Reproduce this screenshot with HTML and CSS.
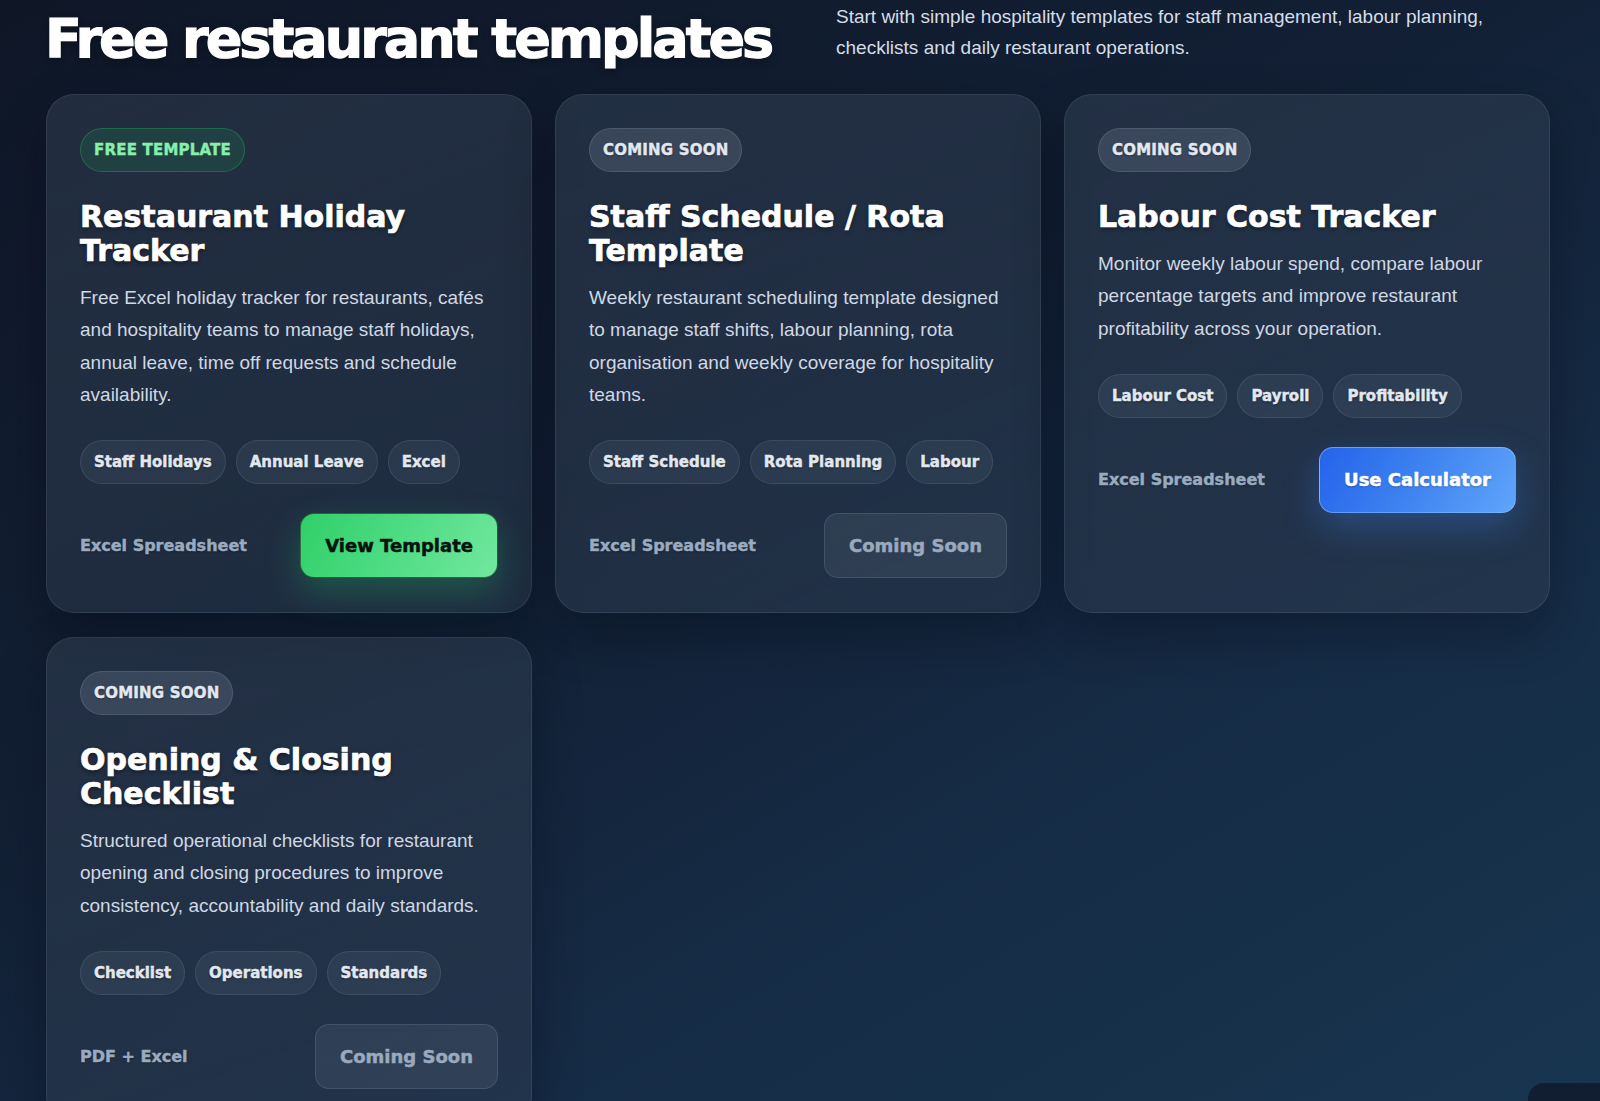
FILE: index.html
```html
<!DOCTYPE html>
<html lang="en">
<head>
<meta charset="utf-8">
<title>Free restaurant templates</title>
<link rel="stylesheet" href="styles.css">
</head>
<body>
<main class="page">
  <header class="hero">
    <h1 class="hero-title">Free restaurant templates</h1>
    <p class="hero-text">Start with simple hospitality templates for staff management, labour planning, checklists and daily restaurant operations.</p>
  </header>

  <section class="grid">
    <article class="card">
      <span class="badge badge-free">FREE TEMPLATE</span>
      <h2 class="card-title">Restaurant Holiday Tracker</h2>
      <p class="card-text">Free Excel holiday tracker for restaurants, cafés and hospitality teams to manage staff holidays, annual leave, time off requests and schedule availability.</p>
      <ul class="tags">
        <li class="tag">Staff Holidays</li>
        <li class="tag">Annual Leave</li>
        <li class="tag">Excel</li>
      </ul>
      <div class="card-foot">
        <span class="format">Excel Spreadsheet</span>
        <a class="btn btn-green" href="#">View Template</a>
      </div>
    </article>

    <article class="card">
      <span class="badge badge-soon">COMING SOON</span>
      <h2 class="card-title">Staff Schedule / Rota Template</h2>
      <p class="card-text">Weekly restaurant scheduling template designed to manage staff shifts, labour planning, rota organisation and weekly coverage for hospitality teams.</p>
      <ul class="tags">
        <li class="tag">Staff Schedule</li>
        <li class="tag">Rota Planning</li>
        <li class="tag">Labour</li>
      </ul>
      <div class="card-foot">
        <span class="format">Excel Spreadsheet</span>
        <span class="btn btn-muted">Coming Soon</span>
      </div>
    </article>

    <article class="card">
      <span class="badge badge-soon">COMING SOON</span>
      <h2 class="card-title">Labour Cost Tracker</h2>
      <p class="card-text">Monitor weekly labour spend, compare labour percentage targets and improve restaurant profitability across your operation.</p>
      <ul class="tags">
        <li class="tag">Labour Cost</li>
        <li class="tag">Payroll</li>
        <li class="tag">Profitability</li>
      </ul>
      <div class="card-foot">
        <span class="format">Excel Spreadsheet</span>
        <a class="btn btn-blue" href="#">Use Calculator</a>
      </div>
    </article>

    <article class="card">
      <span class="badge badge-soon">COMING SOON</span>
      <h2 class="card-title">Opening &amp; Closing Checklist</h2>
      <p class="card-text">Structured operational checklists for restaurant opening and closing procedures to improve consistency, accountability and daily standards.</p>
      <ul class="tags">
        <li class="tag">Checklist</li>
        <li class="tag">Operations</li>
        <li class="tag">Standards</li>
      </ul>
      <div class="card-foot">
        <span class="format">PDF + Excel</span>
        <span class="btn btn-muted">Coming Soon</span>
      </div>
    </article>
  </section>
</main>
<div class="corner-widget"></div>
</body>
</html>
```

FILE: styles.css
```css
html {
  overflow: hidden;
}

body {
  margin: 0;
  min-height: 1101px;
  background: linear-gradient(150deg, #0f1727 0%, #121f34 40%, #162d47 72%, #18354f 100%);
  color: #ffffff;
  font-family: "Liberation Sans", Arial, sans-serif;
}

.page {
  width: 1504px;
  margin-left: 46px;
}

.hero {
  height: 94px;
  box-sizing: border-box;
  display: flex;
  justify-content: space-between;
  align-items: flex-start;
}

.hero-title {
  margin: 11px 0 0 -1px;
  font-family: "DejaVu Sans", sans-serif;
  font-weight: 700;
  font-size: 54px;
  line-height: 56px;
  letter-spacing: -3px;
  color: #ffffff;
  -webkit-text-stroke: 1.2px #ffffff;
  text-shadow: 0 3px 8px rgba(0, 0, 0, 0.35);
  white-space: nowrap;
}

.hero-text {
  width: 714px;
  margin: 1px 0 0 0;
  font-size: 19px;
  line-height: 31px;
  color: #d5dde8;
}

.grid {
  display: grid;
  grid-template-columns: repeat(3, 1fr);
  column-gap: 23px;
  row-gap: 24px;
}

.card {
  display: flex;
  flex-direction: column;
  align-items: flex-start;
  padding: 33px 33px 34px;
  border: 1px solid rgba(148, 163, 184, 0.15);
  border-radius: 28px;
  background: linear-gradient(160deg, rgba(51, 65, 85, 0.52) 0%, rgba(51, 65, 85, 0.4) 100%);
  box-shadow: 0 22px 50px rgba(2, 6, 18, 0.32);
}

.badge {
  display: inline-flex;
  align-items: center;
  height: 44px;
  box-sizing: border-box;
  padding: 0 13px;
  border-radius: 999px;
  font-family: "DejaVu Sans", sans-serif;
  font-weight: 700;
  font-size: 15px;
  letter-spacing: 0.2px;
  -webkit-text-stroke: 0.4px currentColor;
}

.badge-free {
  background: rgba(34, 197, 94, 0.13);
  border: 1px solid rgba(34, 197, 94, 0.32);
  color: #86efac;
}

.badge-soon {
  background: rgba(148, 163, 184, 0.2);
  border: 1px solid rgba(148, 163, 184, 0.22);
  color: #e2e8f0;
  text-shadow: 0 1px 2px rgba(0, 0, 0, 0.4);
}

.card-title {
  margin: 28px 0 0 0;
  font-family: "DejaVu Sans", sans-serif;
  font-weight: 700;
  font-size: 30px;
  line-height: 34px;
  color: #ffffff;
  -webkit-text-stroke: 0.7px #ffffff;
  text-shadow: 0 2px 4px rgba(0, 0, 0, 0.45);
}

.card-text {
  margin: 14px 0 0 0;
  font-size: 19px;
  line-height: 32.3px;
  color: #cfd8e3;
}

.tags {
  display: flex;
  flex-wrap: wrap;
  gap: 10px;
  margin: 29px 0 0 0;
  padding: 0;
  list-style: none;
}

.tag {
  display: inline-flex;
  align-items: center;
  height: 44px;
  box-sizing: border-box;
  padding: 0 13px;
  border-radius: 999px;
  background: rgba(148, 163, 184, 0.1);
  border: 1px solid rgba(148, 163, 184, 0.16);
  font-family: "DejaVu Sans", sans-serif;
  font-weight: 700;
  font-size: 15px;
  color: #e2e8f0;
  -webkit-text-stroke: 0.45px #e2e8f0;
  text-shadow: 0 1px 2px rgba(0, 0, 0, 0.55);
}

.card-foot {
  align-self: stretch;
  display: flex;
  justify-content: space-between;
  align-items: center;
  margin-top: 29px;
}

.format {
  font-family: "DejaVu Sans", sans-serif;
  font-weight: 700;
  font-size: 16px;
  color: #9aabc0;
  -webkit-text-stroke: 0.45px #9aabc0;
  text-shadow: 0 1px 2px rgba(0, 0, 0, 0.4);
}

.btn {
  display: inline-flex;
  align-items: center;
  justify-content: center;
  height: 65px;
  box-sizing: border-box;
  padding: 0 24px;
  border-radius: 14px;
  font-family: "DejaVu Sans", sans-serif;
  font-weight: 700;
  font-size: 18px;
  text-decoration: none;
  -webkit-text-stroke: 0.5px currentColor;
}

.btn-green {
  background: linear-gradient(120deg, #2fcf68 0%, #4fdc84 50%, #72e89e 100%);
  border: 1px solid rgba(12, 30, 20, 0.6);
  color: #07140e;
  box-shadow: 0 14px 34px rgba(34, 197, 94, 0.28);
}

.btn-blue {
  height: 66px;
  background: linear-gradient(120deg, #2563eb 0%, #3f83f0 50%, #60a5fa 100%);
  border: 1px solid rgba(147, 197, 253, 0.55);
  color: #ffffff;
  box-shadow: 0 14px 36px rgba(59, 130, 246, 0.32);
  text-shadow: 0 1px 2px rgba(0, 0, 0, 0.3);
}

.btn-muted {
  background: rgba(148, 163, 184, 0.12);
  border: 1px solid rgba(148, 163, 184, 0.2);
  color: #9aa9bd;
}

.corner-widget {
  position: fixed;
  left: 1528px;
  top: 1083px;
  width: 110px;
  height: 60px;
  border-radius: 16px;
  background: #111d31;
}
```
